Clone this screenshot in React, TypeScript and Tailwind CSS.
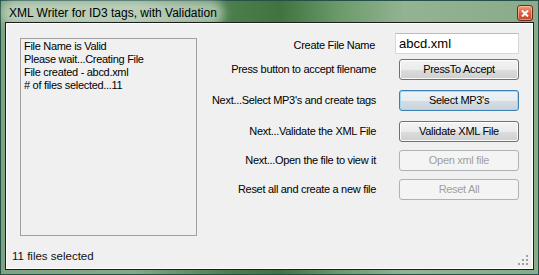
import React from "react";

const rows = [
  { label: "Press button to accept filename", button: "PressTo Accept", mt: "mt-[5px]" },
  { label: "Next...Select MP3's and create tags", button: "Select MP3's", mt: "mt-[10px]", focused: true },
  { label: "Next...Validate the XML File", button: "Validate XML File", mt: "mt-[10px]" },
  { label: "Next...Open the file to view it", button: "Open xml file", mt: "mt-[8px]", disabled: true },
  { label: "Reset all and create a new file", button: "Reset All", mt: "mt-[8px]", disabled: true },
];

const logLines = [
  "File Name is Valid",
  "Please wait...Creating File",
  "File created - abcd.xml",
  "# of files selected...11",
];

const WinButton = ({ text, focused, disabled }: { text: string; focused?: boolean; disabled?: boolean }) => {
  let cls =
    "border-[#707070] text-black bg-[linear-gradient(to_bottom,#f3f3f3_0%,#ebebeb_50%,#dddddd_51%,#cfcfcf_100%)] shadow-[inset_0_0_0_1px_rgba(255,255,255,0.85)]";
  if (focused)
    cls =
      "border-[#3c7fb1] text-black bg-[linear-gradient(to_bottom,#eef3f6_0%,#e6ecf0_50%,#d6dee4_51%,#c9d3da_100%)] shadow-[inset_0_0_0_1px_#9fdcf4]";
  if (disabled) cls = "border-[#adb2b5] text-[#a0a0a0] bg-[#f4f4f4]";
  return (
    <button
      className={`ml-[3px] w-[120px] h-[21px] rounded-[3px] border text-[11px] tracking-[-0.3px] leading-none flex items-center justify-center ${cls}`}
    >
      {text}
    </button>
  );
};

export default function App() {
  return (
    <div className="w-[539px] h-[275px] border border-[#24504a] flex flex-col font-['Liberation_Sans',Arial,sans-serif] bg-[linear-gradient(to_right,#7fa37f_0%,#86a886_25%,#4d7f4d_42%,#3f733f_52%,#6b9a6b_63%,#93b393_75%,#8aab8a_100%)]">
      <div className="h-[21px] flex items-start justify-between pl-[7px] pr-[5px]">
        <span className="mt-[5px] leading-[14px] text-[12px] text-black px-[1px] rounded-full bg-[rgba(225,236,225,0.55)] shadow-[0_0_8px_6px_rgba(225,236,225,0.55)]">
          XML Writer for ID3 tags, with Validation
        </span>
        <div className="mt-[4px] w-[16px] h-[16px] rounded-[3px] border border-[#6b2a1c] bg-[linear-gradient(to_bottom,#f0a080_0%,#d9603f_50%,#c4452a_100%)] flex items-center justify-center shadow-[inset_0_0_0_1px_rgba(255,220,200,0.5)]">
          <svg width="8" height="7" viewBox="0 0 8 7">
            <path d="M1 0.5 L7 6.5 M7 0.5 L1 6.5" stroke="#ffffff" strokeWidth="2" />
          </svg>
        </div>
      </div>

      <div className="flex-1 mx-[4px] mb-[4px] border border-[#1c1c1c]">
        <div className="h-full border border-white bg-[#f0f0f0] flex flex-col text-black">
          <div className="flex-1 flex">
            <div className="ml-[13px] mt-[14px] w-[177px] h-[198px] border border-[#a0a0a0] pl-[3px] pt-[1px] text-[11px] tracking-[-0.3px] leading-[13px]">
              {logLines.map((l) => (
                <div key={l}>{l}</div>
              ))}
            </div>

            <div className="flex-1 flex flex-col pt-[9px] pr-[13px]">
              <div className="h-[21px] flex items-center">
                <span className="flex-1 text-right pr-[20px] pt-[3px] text-[11px] tracking-[-0.3px]">Create File Name</span>
                <div className="w-[124px] h-[21px] border border-[#d6d8dc] border-t-[#b9bcc2] bg-white pl-[3px] flex items-center text-[13px] leading-none">
                  abcd.xml
                </div>
              </div>
              {rows.map((r) => (
                <div key={r.label} className={`h-[21px] flex items-center ${r.mt}`}>
                  <span className="flex-1 text-right pr-[20px] text-[11px] tracking-[-0.3px]">{r.label}</span>
                  <WinButton text={r.button} focused={r.focused} disabled={r.disabled} />
                </div>
              ))}
            </div>
          </div>

          <div className="h-[22px] flex items-center justify-between pl-[5px] pr-[4px]">
            <span className="text-[11.5px] text-[#111]">11 files selected</span>
            <svg width="10" height="10" viewBox="0 0 10 10" className="self-end mb-[3px]">
              <rect x="8" y="0" width="2" height="2" fill="#a0a0a0" />
              <rect x="4" y="4" width="2" height="2" fill="#a0a0a0" />
              <rect x="8" y="4" width="2" height="2" fill="#a0a0a0" />
              <rect x="0" y="8" width="2" height="2" fill="#a0a0a0" />
              <rect x="4" y="8" width="2" height="2" fill="#a0a0a0" />
              <rect x="8" y="8" width="2" height="2" fill="#a0a0a0" />
            </svg>
          </div>
        </div>
      </div>
    </div>
  );
}
